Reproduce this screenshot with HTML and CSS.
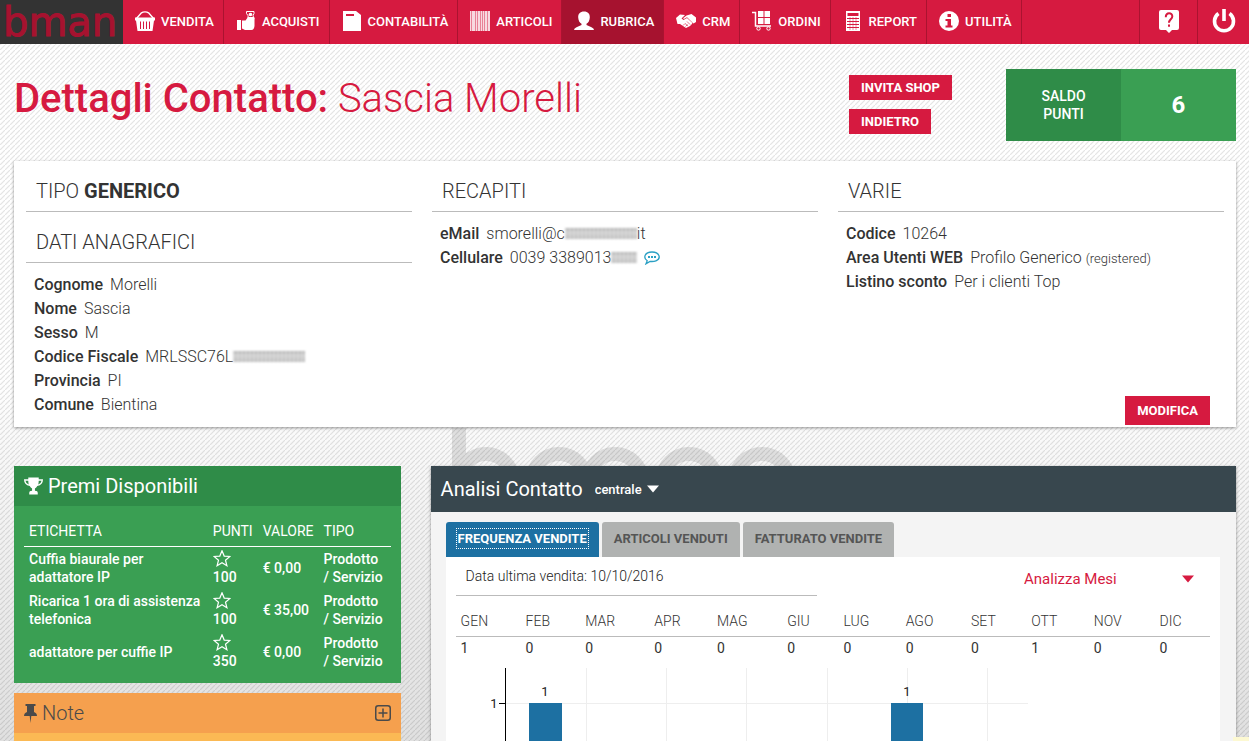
FILE: index.html
```html
<!DOCTYPE html>
<html lang="it">
<head>
<meta charset="utf-8">
<title>bman - Dettagli Contatto</title>
<meta name="viewport" content="width=device-width, initial-scale=1">
<link rel="stylesheet" href="styles.css">
</head>
<body>
<header class="topbar">
  <a class="logo" href="#">bman</a>
  <nav class="menu">
    <a class="menu-item" href="#">
      <svg class="icon" viewBox="0 0 20 20"><path d="M1.5 7.500 6 2.200q4-2.600 8 0l4.500 5.300" fill="none" stroke="#fff" stroke-width="1.400"/><path fill="#fff" fill-rule="evenodd" d="M0 6.500h20v3h-1l-1.500 10.500h-15L1 9.500H0zM5 10.500v7.500h1v-7.500zM8 10.500v7.500h1v-7.500zM11 10.500v7.500h1v-7.500zM14 10.500v7.500h1v-7.500z"/></svg>
      VENDITA</a>
    <a class="menu-item" href="#">
      <svg class="icon" viewBox="0 0 20 20"><path fill="#fff" d="M1 9h4v10H1zM6 9.500h3.500L12 6h6q1 1 .5 3v6q-.5 4-3 4H9l-3-1.500z"/><path d="M10.500.5h7.500v2q-2 2 0 5h-6q1-3-1.500-5z" fill="none" stroke="#fff"/><circle cx="14.500" cy="3.500" r="1.800" fill="#fff"/></svg>
      ACQUISTI</a>
    <a class="menu-item" href="#">
      <svg class="icon" viewBox="0 0 20 20"><path fill="#fff" fill-rule="evenodd" d="M1 0h13l5 4v16H1zM4 3v2h8V3z"/></svg>
      CONTABILITÀ</a>
    <a class="menu-item" href="#">
      <svg class="icon" viewBox="0 0 20 20"><path fill="#fff" fill-opacity=".45" d="M0 0h20v20H0z"/><path fill="#fff" fill-opacity=".7" d="M0 0h1v20H0zM2 0h3v20H2zM6 0h1v20H6zM8 0h2v20H8zM11 0h1v20h-1zM13 0h1v20h-1zM15 0h2v20h-2zM18 0h2v20h-2z"/></svg>
      ARTICOLI</a>
    <a class="menu-item menu-item--active" href="#" aria-current="page">
      <svg class="icon" viewBox="0 0 20 20"><path fill="#fff" d="M10 .5c4 0 6 2.500 5.800 6-.2 3-1.300 5.300-3.300 6.300v1.200l5 2.200q2.500 1 2.500 2.800H0q0-1.800 2.500-2.800l5-2.200v-1.200c-2-1-3.100-3.300-3.300-6.300C4 3 6 .5 10 .5z"/></svg>
      RUBRICA</a>
    <a class="menu-item" href="#">
      <svg class="icon" viewBox="0 0 20 20"><path fill="#fff" d="M0 7l4-3.500 5 .5-3.500 3.500L7.500 9 11 7l5.500 5-1 1.500-1.500 1.500-2 1L10 17 4 13H1.500zM10.500 4.500 15.500 3 20 6.500V11l-2.500 1.500L11 6.200 8 8 7 7.200z"/><path d="M7 14.500l2-2M9.500 15.500l2-2M12 15l-3-2.500M14 13.500l-3-3" stroke="#d61a40" stroke-width=".6"/></svg>
      CRM</a>
    <a class="menu-item" href="#">
      <svg class="icon" viewBox="0 0 20 20"><path d="M0 1.500h3.500v13.500H19" fill="none" stroke="#fff" stroke-width="1.500"/><path fill="#fff" d="M6 0h5.500v6H6zM12.500 0H18v6h-5.500zM6 7h5.500v6H6zM12.500 7H18v6h-5.500z"/><circle cx="6.500" cy="17.500" r="1.700" fill="none" stroke="#fff"/><circle cx="16.500" cy="17.500" r="1.700" fill="none" stroke="#fff"/></svg>
      ORDINI</a>
    <a class="menu-item" href="#">
      <svg class="icon" viewBox="0 0 20 20"><path fill="#fff" fill-rule="evenodd" d="M3 0h14v20H3zM4.500 2v3h11V2zM4 7v1h12V7zM4 10v1h12v-1zM4 13v1h12v-1zM4 16v1h12v-1z"/><path d="M7 6v13M10 6v13M13 6v13" stroke="#d61a40" stroke-width=".5"/></svg>
      REPORT</a>
    <a class="menu-item" href="#">
      <svg class="icon" viewBox="0 0 20 20"><circle cx="10" cy="10" r="10" fill="#fff"/><path fill="#d61a40" d="M8.500 3h3.500v3H8.500zM6.500 8H12v6.500h1.500v2h-7v-2h2V10h-2z"/></svg>
      UTILITÀ</a>
  </nav>
  <a class="tool" href="#" aria-label="Aiuto">
    <svg class="icon icon--large" viewBox="0 0 24 24"><path fill="#fff" d="M4 1h16q2 0 2 2v16q0 2-2 2h-5l-3 3-3-3H4q-2 0-2-2V3q0-2 2-2z"/><path d="M8.800 8.200C8.600 3 15.500 3.200 15.300 7.500c-.1 2.700-3.300 3-3.300 6.300" fill="none" stroke="#d61a40" stroke-width="2"/><path fill="#d61a40" d="M11 15.500h2v2.200h-2z"/></svg>
  </a>
  <a class="tool tool--exit" href="#" aria-label="Esci">
    <svg class="icon icon--large" viewBox="0 0 24 24"><path d="M6.500 4.500a9.500 9.500 0 1 0 11 0M12 0v12" fill="none" stroke="#fff" stroke-width="3.600"/></svg>
  </a>
</header>

<main class="page">
  <svg class="watermark" viewBox="0 0 346 38" aria-hidden="true">
    <g class="watermark-shape">
      <path d="M7 0v38"/>
      <circle cx="34" cy="53" r="27"/>
      <circle cx="107" cy="53" r="27"/>
      <circle cx="163" cy="53" r="27"/>
      <circle cx="237" cy="53" r="27"/>
      <circle cx="310" cy="53" r="27"/>
    </g>
  </svg>

  <section class="heading">
    <h1 class="title"><strong>Dettagli Contatto:</strong> Sascia Morelli</h1>
    <div class="actions">
      <button class="btn" type="button">INVITA SHOP</button>
      <button class="btn" type="button">INDIETRO</button>
    </div>
    <div class="points">
      <span class="points-label">SALDO<br>PUNTI</span>
      <span class="points-value">6</span>
    </div>
  </section>

  <section class="card">
    <div class="card-col">
      <h2 class="card-title">TIPO <strong>GENERICO</strong></h2>
      <h2 class="card-title">DATI ANAGRAFICI</h2>
      <dl class="facts">
        <div class="fact"><dt>Cognome</dt><dd>Morelli</dd></div>
        <div class="fact"><dt>Nome</dt><dd>Sascia</dd></div>
        <div class="fact"><dt>Sesso</dt><dd>M</dd></div>
        <div class="fact"><dt>Codice Fiscale</dt><dd>MRLSSC76L<span class="smudge smudge--long"></span></dd></div>
        <div class="fact"><dt>Provincia</dt><dd>PI</dd></div>
        <div class="fact"><dt>Comune</dt><dd>Bientina</dd></div>
      </dl>
    </div>
    <div class="card-col">
      <h2 class="card-title">RECAPITI</h2>
      <dl class="facts">
        <div class="fact"><dt>eMail</dt><dd>smorelli@c<span class="smudge smudge--long"></span>it</dd></div>
        <div class="fact"><dt>Cellulare</dt><dd>0039 3389013<span class="smudge smudge--short"></span></dd>
          <dd><a class="sms" href="#" aria-label="Invia SMS"><svg class="sms-icon" viewBox="0 0 16 14"><path d="M3.200 9.700C-1 7 .5 1 8 1s9.500 6.500 4 8.800q-2.500 1-6 .6L2 12.800z" fill="none" stroke="#2ba0c4" stroke-width="1.300"/><path fill="#2ba0c4" d="M4 5h2v2H4zM7 5h2v2H7zM10 5h2v2h-2z"/></svg></a></dd></div>
      </dl>
    </div>
    <div class="card-col">
      <h2 class="card-title">VARIE</h2>
      <dl class="facts">
        <div class="fact"><dt>Codice</dt><dd>10264</dd></div>
        <div class="fact"><dt>Area Utenti WEB</dt><dd>Profilo Generico <small>(registered)</small></dd></div>
        <div class="fact"><dt>Listino sconto</dt><dd>Per i clienti Top</dd></div>
      </dl>
      <button class="btn btn--edit" type="button">MODIFICA</button>
    </div>
  </section>

  <div class="panels">
    <div class="side">
      <section class="rewards">
        <h2 class="side-title side-title--green">
          <svg class="side-icon" viewBox="0 0 20 18"><path fill="#fff" d="M4.500 0h11v2H20q0 6-6 7-1 2-2.500 2.500V14q3 0 3 2.500V18h-9v-1.500q0-2.500 3-2.500v-2.500Q7 11 6 9 0 8 0 2h4.500zM1.500 3.500q.5 3 3.500 4-.5-2-.5-4zM15.500 3.500q0 2-.5 4 3-1 3.500-4z"/></svg>
          Premi Disponibili</h2>
        <table class="rewards-table">
          <thead><tr><th>ETICHETTA</th><th>PUNTI</th><th>VALORE</th><th>TIPO</th></tr></thead>
          <tbody>
            <tr><td>Cuffia biaurale per adattatore IP</td><td><svg class="star" viewBox="0 0 18 18"><path d="M9 .8l2.200 5.300 5.700.4-4.400 3.700 1.400 5.600L9 12.800l-4.900 3 1.400-5.600L1.100 6.500l5.700-.4z"/></svg>100</td><td>€ 0,00</td><td>Prodotto<br>/ Servizio</td></tr>
            <tr><td>Ricarica 1 ora di assistenza telefonica</td><td><svg class="star" viewBox="0 0 18 18"><path d="M9 .8l2.200 5.300 5.700.4-4.400 3.700 1.400 5.600L9 12.800l-4.900 3 1.400-5.600L1.100 6.500l5.700-.4z"/></svg>100</td><td>€ 35,00</td><td>Prodotto<br>/ Servizio</td></tr>
            <tr><td>adattatore per cuffie IP</td><td><svg class="star" viewBox="0 0 18 18"><path d="M9 .8l2.200 5.300 5.700.4-4.400 3.700 1.400 5.600L9 12.800l-4.900 3 1.400-5.600L1.100 6.500l5.700-.4z"/></svg>350</td><td>€ 0,00</td><td>Prodotto<br>/ Servizio</td></tr>
          </tbody>
        </table>
      </section>
      <section class="notes">
        <h2 class="side-title side-title--orange">
          <svg class="pin-icon" viewBox="0 0 13 20"><path fill="#4a4a4a" d="M1.500 1h10v2h-1.500v6q3 1 3 4H7.300L6.500 20 5.700 13H0q0-3 3-4V3H1.500z"/></svg>
          Note
          <button class="add" type="button" aria-label="Aggiungi nota"><svg class="add-icon" viewBox="0 0 16 16"><rect x=".75" y=".75" width="14.500" height="14.500" rx="2.500"/><path d="M8 3.500v9M3.500 8h9"/></svg></button>
        </h2>
      </section>
    </div>

    <section class="analysis">
      <div class="analysis-head">
        <h2 class="analysis-title">Analisi Contatto</h2>
        <span class="picker">
          <select class="picker-select" aria-label="Sede"><option>centrale</option></select>
          <svg class="caret" viewBox="0 0 12 8"><path fill="currentColor" d="M0 .5h12L6 7.500z"/></svg>
        </span>
      </div>
      <div class="analysis-body">
        <div class="tabs" role="tablist">
          <button class="tab tab--active" type="button" role="tab" aria-selected="true"><span class="tab-focus">FREQUENZA VENDITE</span></button>
          <button class="tab" type="button" role="tab" aria-selected="false">ARTICOLI VENDUTI</button>
          <button class="tab" type="button" role="tab" aria-selected="false">FATTURATO VENDITE</button>
        </div>
        <div class="tab-panel" role="tabpanel">
          <div class="filters">
            <p class="last-sale">Data ultima vendita: 10/10/2016</p>
            <span class="picker picker--red">
              <select class="picker-select" aria-label="Tipo di analisi"><option>Analizza Mesi</option></select>
              <svg class="caret" viewBox="0 0 12 8"><path fill="currentColor" d="M0 .5h12L6 7.500z"/></svg>
            </span>
          </div>
          <table class="months">
            <thead><tr><th>GEN</th><th>FEB</th><th>MAR</th><th>APR</th><th>MAG</th><th>GIU</th><th>LUG</th><th>AGO</th><th>SET</th><th>OTT</th><th>NOV</th><th>DIC</th></tr></thead>
            <tbody><tr><td>1</td><td>0</td><td>0</td><td>0</td><td>0</td><td>0</td><td>0</td><td>0</td><td>0</td><td>1</td><td>0</td><td>0</td></tr></tbody>
          </table>
          <div class="chart">
            <svg class="chart-svg" width="600" height="300" viewBox="0 0 600 300">
              <path class="grid-line" d="M130.500 8v292M210.500 8v292M290.500 8v292M371.500 8v292M451.500 8v292M531.500 8v292M50 43.500h522"/>
              <rect class="bar" x="73" y="43" width="33" height="257"/>
              <rect class="bar" x="435" y="43" width="32" height="257"/>
              <path class="axis" d="M49.500 8v292M43 43.500h7"/>
              <text class="chart-text" x="38" y="48" text-anchor="middle">1</text>
              <text class="chart-text" x="89" y="36" text-anchor="middle">1</text>
              <text class="chart-text" x="451" y="36" text-anchor="middle">1</text>
            </svg>
          </div>
        </div>
      </div>
    </section>
  </div>
</main>
<div class="corner-tip"></div>
</body>
</html>
```
FILE: styles.css
```css
* { box-sizing: border-box; }

body {
  margin: 0;
  height: 100vh;
  display: flex;
  flex-direction: column;
  overflow: hidden;
  font-family: Roboto, "Liberation Sans", sans-serif;
  font-size: 14px;
  color: #333;
  background:
    linear-gradient(135deg, transparent 35%, rgba(0, 0, 0, .1) 50%, transparent 65%) 0 0 / 5px 5px,
    linear-gradient(#fff 0, #fff 50%, #e0e0e0 100%);
}

h1, h2, p, dl, dd { margin: 0; font-weight: 300; }
button, select { font-family: inherit; border: 0; cursor: pointer; }
a { color: inherit; text-decoration: none; }
svg { display: block; flex: none; }

/* top bar */
.topbar { display: flex; height: 44px; flex: none; background: #d61a40; color: #fff; }
.logo {
  width: 123px;
  padding-left: 3px;
  background: #333;
  color: #a6122f;
  font: 400 40px/44px "DejaVu Sans", sans-serif;
  -webkit-text-stroke: 1px #a6122f;
}
.menu { display: flex; flex: 1; }
.menu-item {
  display: flex;
  align-items: center;
  gap: 6px;
  padding: 0 9px 2px 12px;
  border-right: 1px solid #aa1330;
  font-size: 13px;
  font-weight: 500;
}
.menu-item--active { background: #a6122f; }
.icon { width: 20px; height: 20px; }
.icon--large { width: 24px; height: 24px; }
.tool {
  display: flex;
  align-items: center;
  justify-content: center;
  width: 58px;
  padding-bottom: 2px;
  border-left: 1px solid #aa1330;
}
.tool--exit { width: 52px; }

/* page */
.page {
  position: relative;
  z-index: 0;
  flex: 1;
  min-height: 0;
  display: flex;
  flex-direction: column;
  padding: 25px 13px 0 14px;
}
.watermark {
  position: absolute;
  z-index: -1;
  top: 384px;
  left: 452px;
  width: 346px;
  height: 38px;
}
.watermark-shape { fill: none; stroke: #000; stroke-width: 14px; opacity: .1; }

.heading { display: flex; align-items: flex-start; margin-bottom: 20px; }
.title { flex: 1; font-size: 40px; line-height: 60px; color: #d61a40; }
.title strong { font-weight: 500; }
.actions {
  display: flex;
  flex-direction: column;
  align-items: flex-start;
  gap: 9px;
  width: 157px;
  padding-top: 6px;
}
.btn {
  height: 25px;
  padding: 0 12px;
  background: #d61a40;
  color: #fff;
  font-size: 13px;
  font-weight: 700;
}
.points { display: flex; width: 230px; height: 72px; background: #3a9f53; color: #fff; }
.points span { flex: 1; display: flex; align-items: center; justify-content: center; text-align: center; }
.points-label { background: #2f8c48; line-height: 18px; font-weight: 500; }
.points-value { font-size: 24px; font-weight: 700; }

/* contact card */
.card {
  display: grid;
  grid-template-columns: repeat(3, 1fr);
  gap: 20px;
  padding: 0 12px;
  margin-bottom: 39px;
  background: #fff;
  box-shadow: 0 1px 3px rgba(0, 0, 0, .4);
}
.card-col { display: flex; flex-direction: column; }
.card-title {
  margin-top: 10px;
  padding: 0 10px;
  height: 41px;
  border-bottom: 1px solid #bbb;
  font-size: 20px;
  line-height: 40px;
}
.card-title strong { font-weight: 700; }
.facts { padding: 10px 8px; font-size: 16px; line-height: 24px; }
.fact { display: flex; gap: 7px; }
.fact dt { font-weight: 500; }
.fact small { font-size: 13px; line-height: 1; }
.smudge {
  display: inline-block;
  height: 11px;
  filter: blur(1px);
  background:
    repeating-linear-gradient(90deg, rgba(255, 255, 255, .25) 0 2px, transparent 2px 4px),
    linear-gradient(#b0b0b0, #d0d0d0 40%, #bcbcbc);
}
.smudge--long { width: 72px; }
.smudge--short { width: 26px; }
.sms { display: flex; height: 24px; align-items: center; }
.sms-icon { width: 16px; height: 14px; }
.btn--edit { align-self: flex-end; height: 29px; margin: auto 14px 2px 0; }

/* lower panels */
.panels {
  flex: 1;
  min-height: 0;
  display: grid;
  grid-template-columns: 12fr 25fr;
  gap: 30px;
}
.side { display: flex; flex-direction: column; gap: 10px; min-height: 0; }
.side-title {
  display: flex;
  align-items: center;
  gap: 5px;
  height: 40px;
  padding: 0 10px;
  font-size: 20px;
}
.side-title--green { background: #2f8c48; font-weight: 400; }
.side-title--orange { background: #f5a04e; color: #4a4a4a; }
.side-icon { width: 19px; height: 18px; }
.pin-icon { width: 13px; height: 20px; }
.add { margin-left: auto; padding: 0; background: none; }
.add-icon { width: 16px; height: 16px; fill: none; stroke: #4a4a4a; stroke-width: 1.5; }
.rewards { background: #3a9f53; color: #fff; padding-bottom: 10px; }
.rewards-table {
  width: calc(100% - 20px);
  margin: 10px 10px 0;
  border-collapse: collapse;
  line-height: 18px;
}
.rewards-table th { height: 30px; padding: 0 5px; text-align: left; font-weight: 400; border-bottom: 1px solid #fff; }
.rewards-table td { padding: 3px 5px; font-weight: 500; white-space: nowrap; }
.rewards-table td:first-child { width: 100%; white-space: normal; }
.rewards-table td:last-child { padding-right: 8px; }
.star { width: 18px; height: 18px; fill: none; stroke: #fff; stroke-width: 1.2; }
.notes { flex: 1; min-height: 0; background: #fbb954; }

.analysis {
  display: flex;
  flex-direction: column;
  min-height: 0;
  background: #f4f4f4;
  box-shadow: 0 1px 3px rgba(0, 0, 0, .4);
}
.analysis-head {
  display: flex;
  align-items: center;
  gap: 12px;
  height: 46px;
  flex: none;
  padding: 0 10px;
  background: #38474e;
  color: #fff;
}
.analysis-title { font-size: 20px; font-weight: 400; }
.picker { display: flex; align-items: center; gap: 5px; }
.picker-select {
  appearance: none;
  padding: 0;
  background: none;
  color: inherit;
  font-size: 13px;
  font-weight: 500;
}
.caret { width: 12px; height: 8px; pointer-events: none; }
.analysis-body { flex: 1; min-height: 0; display: flex; flex-direction: column; padding: 10px 16px 0 15px; }
.tabs { display: flex; gap: 3px; }
.tab {
  height: 35px;
  padding: 0 12px 2px;
  border-radius: 3px 3px 0 0;
  background: #b0b2b1;
  color: #555;
  font-size: 13px;
  font-weight: 700;
}
.tab--active { padding: 0 10px 2px; background: #1d70a2; color: #fff; }
.tab-focus { display: block; padding: 2px 1px; border: 1px dotted #fff; }
.tab-panel { flex: 1; min-height: 0; display: flex; flex-direction: column; padding: 0 10px; background: #fff; }
.filters { display: flex; justify-content: space-between; height: 39px; }
.last-sale { width: 361px; padding: 0 10px; border-bottom: 1px solid #bbb; line-height: 38px; color: #222; }
.picker--red { width: 170px; margin: 5px 16px 0 0; justify-content: space-between; color: #d61a40; }
.picker--red .picker-select { font-size: 15px; font-weight: 400; }
.months { width: 100%; margin-top: 10px; border-collapse: collapse; text-align: left; }
.months th { height: 30px; padding: 0 5px; font-weight: 300; border-bottom: 1px solid #bbb; }
.months td { height: 24px; padding: 0 5px; }
.chart { flex: 1; min-height: 0; overflow: hidden; }
.grid-line { stroke: #eee; fill: none; }
.axis { stroke: #000; fill: none; }
.bar { fill: #1d70a2; }
.chart-text { font-size: 13px; fill: #222; }

.corner-tip { position: fixed; right: 0; bottom: 0; width: 16px; height: 4px; background: #fdf9d2; }
```
